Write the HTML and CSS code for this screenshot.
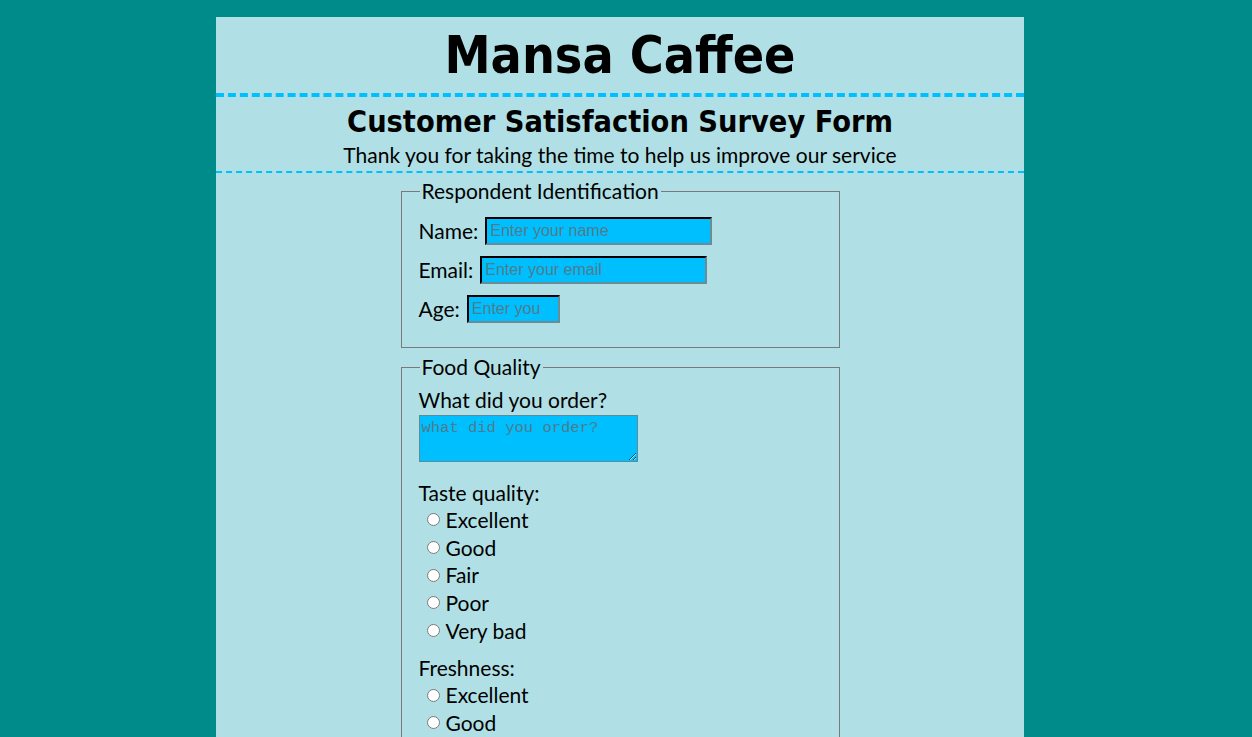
FILE: index.html
```html
<!DOCTYPE html>
<html lang="en">
<head>
<meta charset="utf-8">
<title>Mansa Caffee</title>
<link rel="stylesheet" href="styles.css">
</head>
<body>
<div class="page">
  <header class="top">
    <h1 class="brand">Mansa Caffee</h1>
  </header>
  <section class="intro">
    <h2 class="form-title">Customer Satisfaction Survey Form</h2>
    <p class="lead">Thank you for taking the time to help us improve our service</p>
  </section>
  <form class="survey">
    <fieldset class="group">
      <legend class="legend">Respondent Identification</legend>
      <div class="row first"><label class="lbl" for="name">Name:</label><input class="field field-name" id="name" type="text" placeholder="Enter your name"></div>
      <div class="row"><label class="lbl" for="email">Email:</label><input class="field field-email" id="email" type="email" placeholder="Enter your email"></div>
      <div class="row"><label class="lbl" for="age">Age:</label><input class="field field-age" id="age" type="number" placeholder="Enter your age"></div>
    </fieldset>
    <fieldset class="group">
      <legend class="legend">Food Quality</legend>
      <div class="question q-first">What did you order?</div>
      <textarea class="order" placeholder="what did you order?"></textarea>
      <div class="question q-gap">Taste quality:</div>
      <div class="options">
        <label class="opt"><input class="radio" type="radio" name="taste">Excellent</label>
        <label class="opt"><input class="radio" type="radio" name="taste">Good</label>
        <label class="opt"><input class="radio" type="radio" name="taste">Fair</label>
        <label class="opt"><input class="radio" type="radio" name="taste">Poor</label>
        <label class="opt"><input class="radio" type="radio" name="taste">Very bad</label>
      </div>
      <div class="question q-gap">Freshness:</div>
      <div class="options">
        <label class="opt"><input class="radio" type="radio" name="fresh">Excellent</label>
        <label class="opt"><input class="radio" type="radio" name="fresh">Good</label>
        <label class="opt"><input class="radio" type="radio" name="fresh">Fair</label>
        <label class="opt"><input class="radio" type="radio" name="fresh">Poor</label>
        <label class="opt"><input class="radio" type="radio" name="fresh">Very bad</label>
      </div>
    </fieldset>
  </form>
</div>
</body>
</html>
```
FILE: styles.css
```css
html, body {
  margin: 0;
  padding: 0;
}
body {
  background: #008b8b;
  font-family: "Lato", "DejaVu Sans", sans-serif;
  color: #000;
}
.page {
  width: 808px;
  margin: 17px 0 0 216px;
  background: #b0e0e6;
  padding-bottom: 40px;
}
.top {
  border-bottom: 4px dashed #00bfff;
  padding: 6px 0 6px;
}
.brand {
  margin: 0;
  text-align: center;
  font-family: "DejaVu Sans Condensed", "DejaVu Sans", sans-serif;
  font-weight: bold;
  font-size: 51.5px;
  line-height: 64px;
}
.intro {
  border-bottom: 2px dashed #00bfff;
  text-align: center;
  padding: 7px 0 1px;
}
.form-title {
  margin: 0;
  font-family: "DejaVu Sans Condensed", "DejaVu Sans", sans-serif;
  font-weight: bold;
  font-size: 30.4px;
  line-height: 36px;
}
.lead {
  margin: 0;
  font-size: 21px;
  line-height: 30px;
}
.survey {
  display: flex;
  flex-direction: column;
  align-items: center;
  gap: 7px;
  padding-top: 6px;
}
.group {
  width: 403px;
  margin: 0;
  border: 1px solid #7a7a7a;
  padding: 0 17px 24px;
  font-size: 21px;
}
.legend {
  padding: 0 2px;
  margin-left: 1px;
  line-height: 24px;
}
.row {
  display: flex;
  align-items: center;
  gap: 7px;
  height: 28px;
  margin-top: 11px;
}
.row.first {
  margin-top: 14px;
}
.lbl {
  line-height: 24px;
}
.field {
  box-sizing: border-box;
  height: 28px;
  background: #00bfff;
  border: 2px inset #767676;
  border-color: #1b3b4a #6b8c97 #6b8c97 #1b3b4a;
  font-family: "Liberation Sans", Arial, sans-serif;
  font-size: 16px;
  padding: 1px 3px;
  color: #000;
}
.field::placeholder {
  color: #4f7c8c;
}
.field-name, .field-email {
  width: 227px;
}
.field-age {
  width: 93px;
}
.question {
  line-height: 26px;
}
.q-first {
  margin-top: 8px;
}
.q-gap {
  margin-top: 11px;
}
.order {
  display: block;
  box-sizing: border-box;
  width: 219px;
  height: 47px;
  margin: 2px 0 18px;
  background: #00bfff;
  border: 1px solid #5f8a99;
  font-family: "Liberation Mono", "DejaVu Sans Mono", monospace;
  font-size: 15.5px;
  line-height: 20px;
  padding: 2px 2px;
  resize: both;
}
.order::placeholder {
  color: #4d7c8c;
}
.options {
  display: flex;
  flex-direction: column;
  padding-left: 8px;
}
.opt {
  display: flex;
  align-items: center;
  height: 27.7px;
  line-height: 24px;
}
.radio {
  margin: 0 6px 0 0;
  width: 13px;
  height: 13px;
}
```
